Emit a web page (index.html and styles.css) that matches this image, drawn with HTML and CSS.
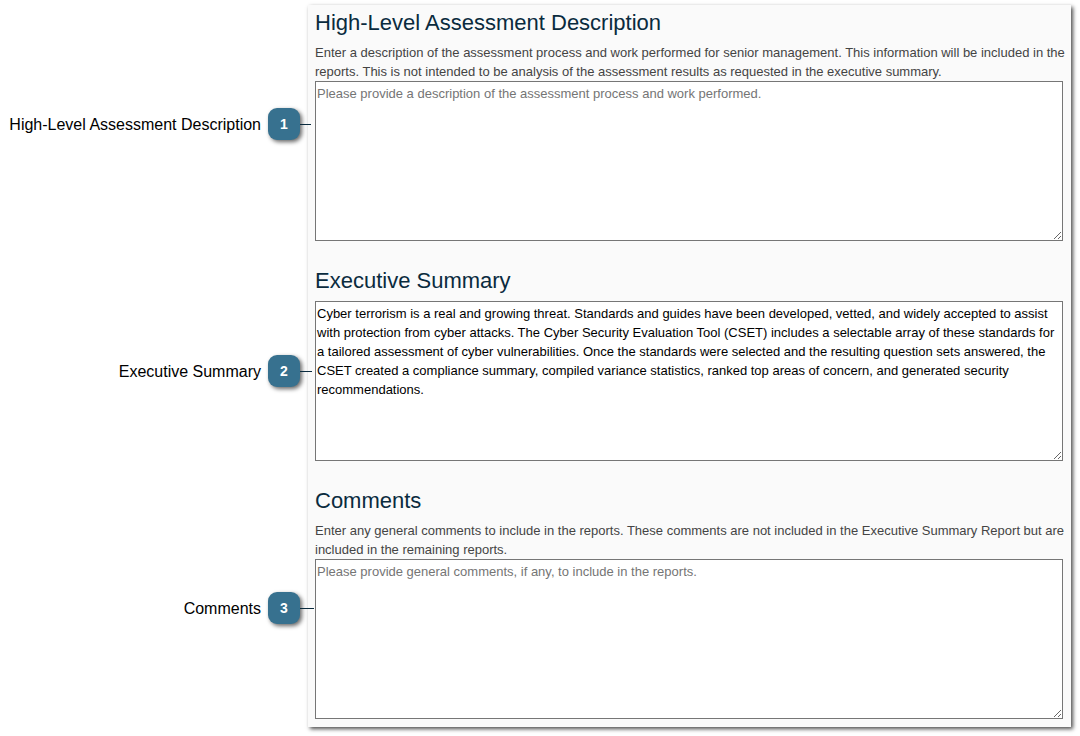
FILE: index.html
```html
<!DOCTYPE html>
<html lang="en">
<head>
<meta charset="utf-8">
<title>Assessment Description</title>
<link rel="stylesheet" href="styles.css">
</head>
<body>
<main class="guide">
  <div class="panel"></div>

  <div class="callout callout-description">
    <span class="callout-label">High-Level Assessment Description</span>
    <span class="badge">1</span>
    <span class="connector"></span>
  </div>
  <section class="field">
    <h2 class="title"><label for="description">High-Level Assessment Description</label></h2>
    <p class="hint">Enter a description of the assessment process and work performed for senior management. This information will be included in the reports. This is not intended to be analysis of the assessment results as requested in the executive summary.</p>
    <textarea class="box" id="description" placeholder="Please provide a description of the assessment process and work performed."></textarea>
  </section>

  <div class="callout callout-summary">
    <span class="callout-label">Executive Summary</span>
    <span class="badge">2</span>
    <span class="connector"></span>
  </div>
  <section class="field">
    <h2 class="title"><label for="summary">Executive Summary</label></h2>
    <textarea class="box" id="summary">Cyber terrorism is a real and growing threat. Standards and guides have been developed, vetted, and widely accepted to assist with protection from cyber attacks. The Cyber Security Evaluation Tool (CSET) includes a selectable array of these standards for a tailored assessment of cyber vulnerabilities. Once the standards were selected and the resulting question sets answered, the CSET created a compliance summary, compiled variance statistics, ranked top areas of concern, and generated security recommendations.</textarea>
  </section>

  <div class="callout callout-comments">
    <span class="callout-label">Comments</span>
    <span class="badge">3</span>
    <span class="connector"></span>
  </div>
  <section class="field">
    <h2 class="title"><label for="comments">Comments</label></h2>
    <p class="hint">Enter any general comments to include in the reports. These comments are not included in the Executive Summary Report but are included in the remaining reports.</p>
    <textarea class="box" id="comments" placeholder="Please provide general comments, if any, to include in the reports."></textarea>
  </section>
</main>
</body>
</html>
```

FILE: styles.css
```css
* {
  box-sizing: border-box;
}

body {
  margin: 0;
  background: #fff;
  color: #000;
  font-family: "Liberation Sans", Arial, sans-serif;
}

.guide {
  display: grid;
  grid-template-columns: 308px minmax(0, 1fr);
  row-gap: 26px;
  padding: 9px 9px 17px 0;
}

.panel {
  grid-column: 2;
  grid-row: 1 / 4;
  margin: -4px 0 -8px;
  background: #fafafa;
  box-shadow: 2px 2px 4px rgba(0, 0, 0, 0.7);
}

.field {
  grid-column: 2;
  padding: 0 8px 0 7px;
}

.field:nth-of-type(1),
.callout-description {
  grid-row: 1;
}

.field:nth-of-type(2),
.callout-summary {
  grid-row: 2;
}

.field:nth-of-type(3),
.callout-comments {
  grid-row: 3;
}

.title {
  margin: 0 0 6px;
  color: #0a2b3e;
  font-size: 22px;
  font-weight: 400;
  line-height: 28px;
}

.hint {
  margin: 0 -8px 0 0;
  color: #444;
  font-size: 13px;
  line-height: 19px;
}

.box {
  display: block;
  width: 100%;
  height: 160px;
  margin: 0;
  padding: 2px 1px;
  border: 1px solid #767676;
  border-radius: 0;
  background: #fff;
  color: #000;
  font: 13px/19px "Liberation Sans", Arial, sans-serif;
  resize: both;
}

.box::placeholder {
  color: #757575;
}

.callout {
  grid-column: 1;
  display: flex;
  align-items: center;
  align-self: start;
  justify-content: flex-end;
  z-index: 1;
}

.callout-description {
  margin: 99px -3px 0 0;
}

.callout-summary {
  margin: 88px -4px 0 0;
}

.callout-comments {
  margin: 105px -6px 0 0;
}

.callout-label {
  margin-right: 7px;
  padding-top: 2px;
  font-size: 16px;
  line-height: 20px;
  white-space: nowrap;
}

.badge {
  width: 32px;
  border-radius: 9px;
  background: #37718f;
  box-shadow: 2px 2px 4px rgba(0, 0, 0, 0.6);
  color: #fff;
  font-size: 14px;
  font-weight: 700;
  line-height: 32px;
  text-align: center;
}

.connector {
  width: 11px;
  height: 1px;
  background: #0a2b3e;
}

.callout-summary .connector {
  width: 12px;
}

.callout-comments .connector {
  width: 14px;
}
```
